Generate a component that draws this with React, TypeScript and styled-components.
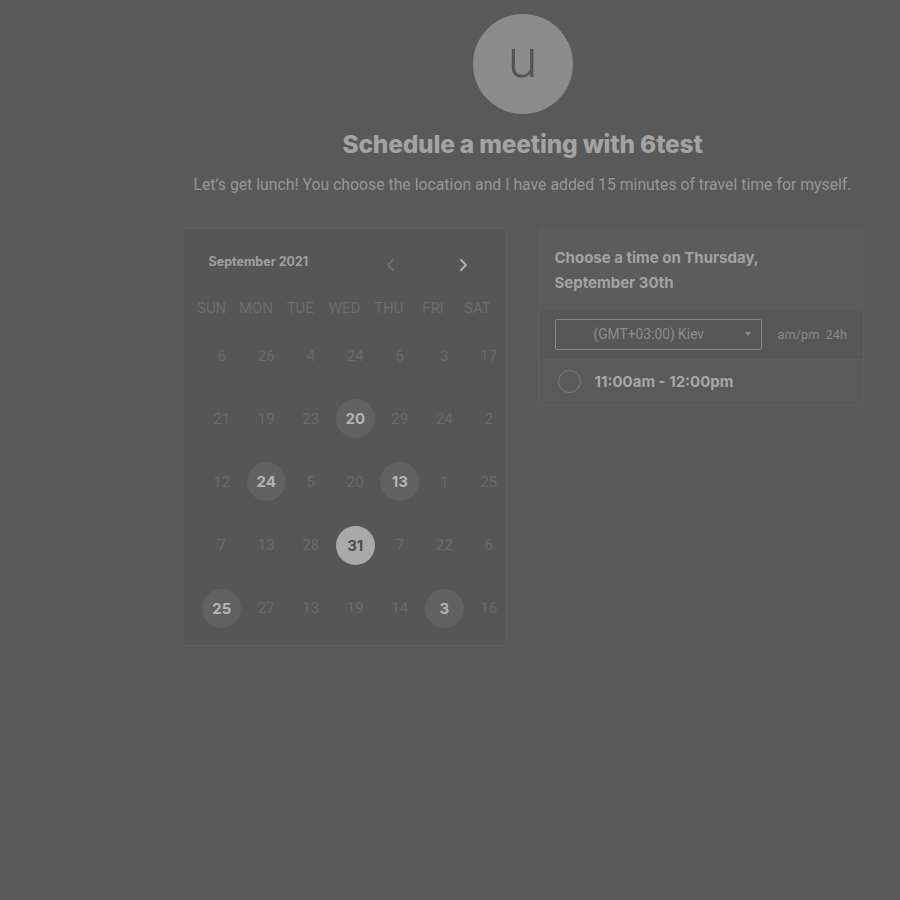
import styled, { createGlobalStyle } from "styled-components";

const GlobalStyle = createGlobalStyle`
  html, body {
    margin: 0;
    padding: 0;
    background: #595959;
  }
  body {
    font-family: Roboto, "Liberation Sans", sans-serif;
    width: 900px;
    height: 900px;
    overflow: hidden;
  }
`;

const Page = styled.div`
  margin-left: 145px;
  width: 755px;
  padding-top: 14px;
  display: flex;
  flex-direction: column;
  align-items: center;
`;

const Avatar = styled.div`
  width: 100px;
  height: 100px;
  border-radius: 50%;
  background: #8c8c8c;
  color: #545454;
  font-family: Roboto, sans-serif;
  font-weight: 300;
  font-size: 54px;
  line-height: 90px;
  text-align: center;
`;

const Title = styled.h1`
  margin: 16px 0 0;
  font-family: Inter, sans-serif;
  font-weight: 800;
  font-size: 24.5px;
  letter-spacing: -0.2px;
  line-height: 28px;
  color: #a3a3a3;
`;

const Subtitle = styled.p`
  margin: 16px 0 0;
  font-size: 15.8px;
  line-height: 22px;
  color: #979797;
`;

const Panels = styled.div`
  margin-top: 32px;
  display: flex;
  align-items: flex-start;
  gap: 31px;
`;

const Calendar = styled.div`
  width: 325px;
  height: 418px;
  box-sizing: border-box;
  background: #565656;
  border: 1px solid #5e5e5e;
  border-radius: 3px;
  padding: 22px 0 0 7px;
`;

const CalHeader = styled.div`
  display: flex;
  align-items: center;
  padding-left: 19px;
  height: 20px;
`;

const Month = styled.div`
  font-family: Inter, sans-serif;
  font-weight: 700;
  font-size: 12.5px;
  color: #a0a0a0;
  width: 175px;
`;

const NavButton = styled.span<{ $dim?: boolean }>`
  display: flex;
  width: 14px;
  justify-content: center;
  margin-top: 8px;
  margin-right: ${(p) => (p.$dim ? "58px" : "0")};
  color: ${(p) => (p.$dim ? "#6e6e6e" : "#b0b0b0")};
`;

const WeekRow = styled.div`
  display: grid;
  grid-template-columns: repeat(7, 44.3px);
  margin-top: 28px;
`;

const WeekDay = styled.div`
  text-align: center;
  font-size: 15px;
  color: #6c6c6c;
`;

const DaysGrid = styled.div`
  display: grid;
  grid-template-columns: repeat(7, 44.5px);
  grid-auto-rows: 63.2px;
  margin-left: 10px;
  margin-top: 7px;
`;

const Day = styled.div<{ $kind: "off" | "on" | "sel" }>`
  display: flex;
  align-items: center;
  justify-content: center;
  font-size: 15px;
  color: ${(p) => (p.$kind === "off" ? "#6a6a6a" : p.$kind === "on" ? "#b4b4b4" : "#4c4c4c")};
  font-weight: ${(p) => (p.$kind === "off" ? 400 : 700)};
  font-family: ${(p) => (p.$kind === "off" ? "Roboto, sans-serif" : "Inter, sans-serif")};
  span {
    width: 39px;
    height: 39px;
    border-radius: 50%;
    display: flex;
    align-items: center;
    justify-content: center;
    background: ${(p) => (p.$kind === "off" ? "transparent" : p.$kind === "on" ? "#616161" : "#a9a9a9")};
  }
`;

const TimePanel = styled.div`
  width: 326px;
  box-sizing: border-box;
  border: 1px solid #5e5e5e;
  border-radius: 3px;
  background: #575757;
`;

const TimeHeader = styled.div`
  background: #5c5c5c;
  padding: 16px;
  height: 82px;
  box-sizing: border-box;
  font-family: Inter, sans-serif;
  font-weight: 700;
  font-size: 15px;
  line-height: 25px;
  color: #a3a3a3;
`;

const ZoneRow = styled.div`
  display: flex;
  align-items: center;
  padding: 8px 16px;
  height: 47px;
  box-sizing: border-box;
  border-bottom: 1px solid #545454;
`;

const Select = styled.div`
  flex-shrink: 0;
  width: 207px;
  height: 31px;
  box-sizing: border-box;
  border: 1px solid #858585;
  border-radius: 2px;
  display: flex;
  align-items: center;
  padding: 0 10px 0 38px;
  font-size: 13.8px;
  color: #8d8d8d;
  white-space: nowrap;
`;

const SelectText = styled.span`
  flex: 1;
`;

const Caret = styled.span`
  width: 0;
  height: 0;
  border-left: 3.5px solid transparent;
  border-right: 3.5px solid transparent;
  border-top: 4px solid #8d8d8d;
`;

const Format = styled.div`
  margin-left: 16px;
  font-size: 12.8px;
  color: #8a8a8a;
  word-spacing: 3px;
  white-space: nowrap;
`;

const SlotRow = styled.div`
  display: flex;
  align-items: center;
  height: 47px;
  padding-left: 19px;
  background: #5a5a5a;
`;

const Radio = styled.span`
  width: 21px;
  height: 21px;
  border-radius: 50%;
  border: 1.5px solid #7c7c7c;
  margin-right: 14px;
`;

const SlotText = styled.span`
  font-family: Inter, sans-serif;
  font-weight: 700;
  font-size: 15px;
  color: #a7a7a7;
`;

type Kind = "off" | "on" | "sel";
const rows: [string, Kind][][] = [
  [["6", "off"], ["26", "off"], ["4", "off"], ["24", "off"], ["6", "off"], ["3", "off"], ["17", "off"]],
  [["21", "off"], ["19", "off"], ["23", "off"], ["20", "on"], ["29", "off"], ["24", "off"], ["2", "off"]],
  [["12", "off"], ["24", "on"], ["5", "off"], ["20", "off"], ["13", "on"], ["1", "off"], ["25", "off"]],
  [["7", "off"], ["13", "off"], ["28", "off"], ["31", "sel"], ["7", "off"], ["22", "off"], ["6", "off"]],
  [["25", "on"], ["27", "off"], ["13", "off"], ["19", "off"], ["14", "off"], ["3", "on"], ["16", "off"]],
];

const weekDays = ["SUN", "MON", "TUE", "WED", "THU", "FRI", "SAT"];

function Chevron({ left }: { left?: boolean }) {
  return (
    <svg width="12" height="14" viewBox="0 0 12 14" fill="none">
      <path
        d={left ? "M8 2 L3 7 L8 12" : "M4 2 L9 7 L4 12"}
        stroke="currentColor"
        strokeWidth="2"
        strokeLinecap="round"
        strokeLinejoin="round"
      />
    </svg>
  );
}

export default function App() {
  return (
    <>
      <GlobalStyle />
      <Page>
        <Avatar>u</Avatar>
        <Title>Schedule a meeting with 6test</Title>
        <Subtitle>
          Let’s get lunch! You choose the location and I have added 15 minutes of travel time for myself.
        </Subtitle>
        <Panels>
          <Calendar>
            <CalHeader>
              <Month>September 2021</Month>
              <NavButton $dim>
                <Chevron left />
              </NavButton>
              <NavButton>
                <Chevron />
              </NavButton>
            </CalHeader>
            <WeekRow>
              {weekDays.map((d) => (
                <WeekDay key={d}>{d}</WeekDay>
              ))}
            </WeekRow>
            <DaysGrid>
              {rows.flat().map(([n, k], i) => (
                <Day key={i} $kind={k}>
                  <span>{n}</span>
                </Day>
              ))}
            </DaysGrid>
          </Calendar>
          <TimePanel>
            <TimeHeader>
              Choose a time on Thursday,
              <br />
              September 30th
            </TimeHeader>
            <ZoneRow>
              <Select>
                <SelectText>(GMT+03:00) Kiev</SelectText>
                <Caret />
              </Select>
              <Format>am/pm 24h</Format>
            </ZoneRow>
            <SlotRow>
              <Radio />
              <SlotText>11:00am - 12:00pm</SlotText>
            </SlotRow>
          </TimePanel>
        </Panels>
      </Page>
    </>
  );
}
